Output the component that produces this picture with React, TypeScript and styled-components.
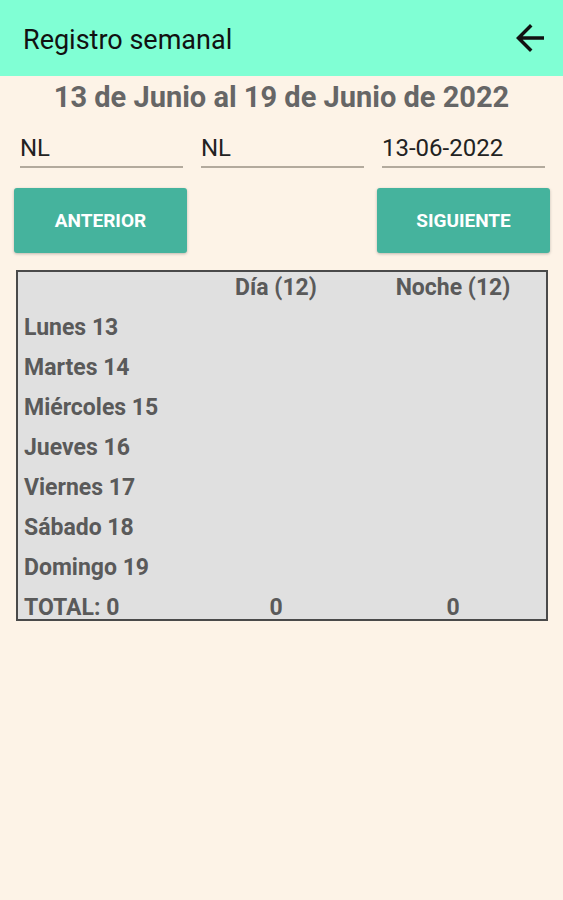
import React from 'react';
import styled, { createGlobalStyle } from 'styled-components';

const GlobalStyle = createGlobalStyle`
  body {
    margin: 0;
    background-color: #fdf3e7;
    font-family: Roboto, "Liberation Sans", sans-serif;
  }
`;

const days = [
  'Lunes 13',
  'Martes 14',
  'Miércoles 15',
  'Jueves 16',
  'Viernes 17',
  'Sábado 18',
  'Domingo 19',
];

const App = () => {
  return (
    <Page>
      <GlobalStyle />
      <Header>
        <HeaderTitle>Registro semanal</HeaderTitle>
        <BackButton aria-label="Volver">
          <svg width="42" height="42" viewBox="0 0 24 24">
            <path
              d="M20 11H7.83l5.59-5.59L12 4l-8 8 8 8 1.41-1.41L7.83 13H20v-2z"
              fill="#111111"
            />
          </svg>
        </BackButton>
      </Header>
      <WeekTitle>13 de Junio al 19 de Junio de 2022</WeekTitle>
      <FieldRow>
        <Field>NL</Field>
        <Field>NL</Field>
        <Field>13-06-2022</Field>
      </FieldRow>
      <ButtonRow>
        <NavButton>ANTERIOR</NavButton>
        <NavButton>SIGUIENTE</NavButton>
      </ButtonRow>
      <Table>
        <Cell />
        <Cell $center>Día (12)</Cell>
        <Cell $center>Noche (12)</Cell>
        {days.map((d) => (
          <React.Fragment key={d}>
            <Cell>{d}</Cell>
            <Cell />
            <Cell />
          </React.Fragment>
        ))}
        <Cell>TOTAL: 0</Cell>
        <Cell $center>0</Cell>
        <Cell $center>0</Cell>
      </Table>
    </Page>
  );
};

export default App;

const Page = styled.div`
  width: 563px;
  min-height: 900px;
  background-color: #fdf3e7;
`;

const Header = styled.div`
  height: 76px;
  background-color: #80ffd4;
  display: flex;
  align-items: center;
  justify-content: space-between;
  padding: 0 12px 0 23px;
  box-sizing: border-box;
`;

const HeaderTitle = styled.span`
  font-size: 27px;
  color: #111111;
  margin-top: 4px;
`;

const BackButton = styled.button`
  border: none;
  background: none;
  padding: 0;
  display: flex;
  margin-top: -1px;
`;

const WeekTitle = styled.div`
  text-align: center;
  font-size: 29px;
  font-weight: 700;
  color: #666666;
  margin-top: 5px;
  line-height: 32px;
`;

const FieldRow = styled.div`
  display: grid;
  grid-template-columns: repeat(3, 163px);
  column-gap: 18px;
  padding-left: 20px;
  margin-top: 15px;
`;

const Field = styled.div`
  font-size: 24px;
  color: #222222;
  height: 40px;
  padding-top: 4px;
  line-height: 32px;
  border-bottom: 2px solid #b3aa9d;
  box-sizing: border-box;
`;

const ButtonRow = styled.div`
  display: flex;
  justify-content: space-between;
  padding: 0 13px 0 14px;
  margin-top: 20px;
`;

const NavButton = styled.button`
  width: 173px;
  height: 65px;
  border: none;
  border-radius: 3px;
  background-color: #45b39d;
  color: #ffffff;
  font-family: Roboto, "Liberation Sans", sans-serif;
  font-size: 19px;
  font-weight: 700;
  box-shadow: 0 1px 3px rgba(0, 0, 0, 0.25);
`;

const Table = styled.div`
  margin: 17px 15px 0 16px;
  border: 2px solid #4a4a4a;
  background-color: #e0e0e0;
  display: grid;
  grid-template-columns: 163px 178px 1fr;
  grid-auto-rows: 32px;
  row-gap: 8px;
  padding-left: 6px;
  padding-right: 5px;
  height: 351px;
  box-sizing: border-box;
`;

const Cell = styled.div<{ $center?: boolean }>`
  font-size: 23px;
  font-weight: 700;
  color: #5a5a5a;
  line-height: 32px;
  text-align: ${(p) => (p.$center ? 'center' : 'left')};
`;
